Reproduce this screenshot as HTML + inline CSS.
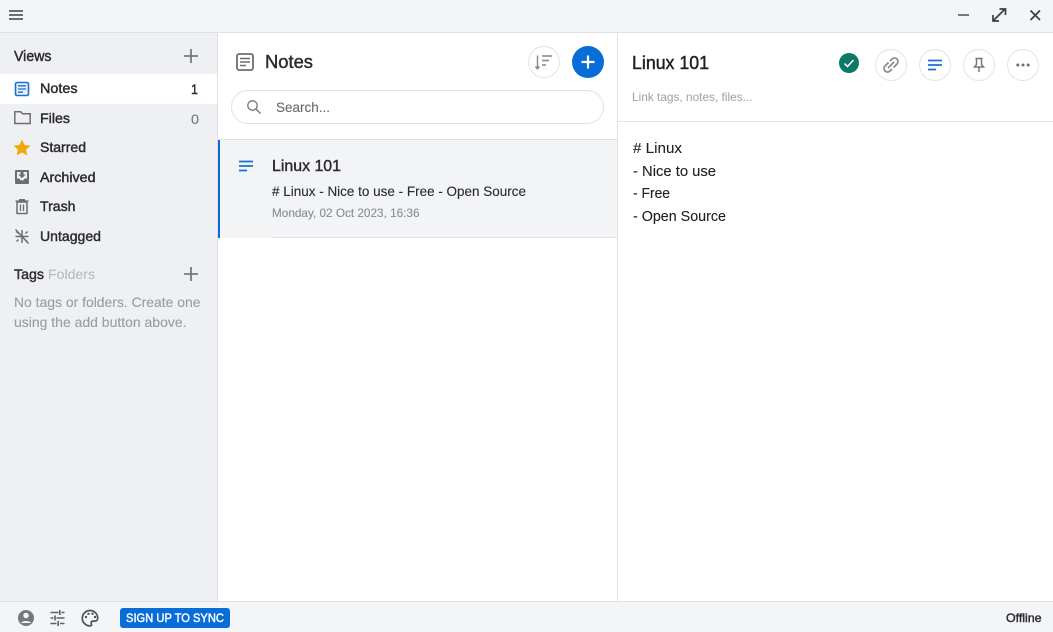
<!DOCTYPE html>
<html><head><meta charset="utf-8"><title>Notes</title>
<style>
html,body{margin:0;padding:0;background:#fff;width:1053px;height:632px;overflow:hidden}
svg{display:block}
text{font-family:"Liberation Sans",sans-serif;fill:currentColor;stroke:currentColor;stroke-width:.12;color:#2b2b2f}
.b{stroke-width:.42}
.ic{fill:none;stroke:#6d6e73;stroke-width:1.500}
.f{fill:#6d6e73;stroke:none}
.c{fill:#fff;stroke:#e2e4e7;stroke-width:1}
</style></head><body>
<svg width="1053" height="632" viewBox="0 0 1053 632" xmlns="http://www.w3.org/2000/svg">
<rect width="1053" height="632" fill="#fff"/>
<rect width="1053" height="32" fill="#f4f5f7"/>
<rect y="32" width="1053" height="1" fill="#dfe1e4"/>
<rect y="33" width="217" height="568" fill="#eef0f3"/>
<rect x="217" y="33" width="1" height="568" fill="#dfe1e4"/>
<rect x="617" y="33" width="1" height="568" fill="#dfe1e4"/>
<rect y="601" width="1053" height="31" fill="#f4f5f7"/>
<rect y="601" width="1053" height="1" fill="#dfe1e4"/>

<!-- titlebar -->
<rect x="9" y="10" width="14" height="2" fill="#6d6e73"/>
<rect x="9" y="14" width="14" height="2" fill="#6d6e73"/>
<rect x="9" y="18" width="14" height="2" fill="#6d6e73"/>
<rect x="958" y="14" width="11" height="2" fill="#77787d"/>
<path d="M993.500 20.500l11-11M999.500 9h6v6M993 15v6h6" stroke="#3c3d41" stroke-width="1.700" fill="none"/>
<path d="M1030.500 10.500l9.500 9.500M1040 10.500l-9.500 9.500" stroke="#3c3d41" stroke-width="1.700" fill="none"/>

<!-- sidebar -->
<text x="14" y="61" font-size="14.500" class="b" textLength="37.500" lengthAdjust="spacingAndGlyphs">Views</text>
<path d="M191 49v14M184 56h14" stroke="#77787d" stroke-width="1.800" fill="none"/>
<rect y="74" width="217" height="30" fill="#fff"/>
<rect x="15.500" y="82.500" width="13" height="13" rx="1.500" fill="#e6f0fb" stroke="#1a6fd0" stroke-width="1.600"/>
<path d="M18 85.800h8M18 89h8M18 92.200h5" stroke="#1a6fd0" stroke-width="1.300" fill="none"/>
<text x="40" y="93" font-size="14" class="b" textLength="37.500" lengthAdjust="spacingAndGlyphs">Notes</text>
<text x="191" y="94" font-size="14" class="b" textLength="7" lengthAdjust="spacingAndGlyphs">1</text>

<path d="M14.800 123.500v-11.700h6l1.700 2h7.700v9.700z" class="ic"/>
<text x="40" y="123" font-size="14" class="b" textLength="30" lengthAdjust="spacingAndGlyphs">Files</text>
<text x="191" y="124" font-size="14" style="color:#77787d" textLength="8" lengthAdjust="spacingAndGlyphs">0</text>

<path d="M22 139.500l2.500 5.500 6 .6-4.500 4 1.300 5.900-5.300-3.100-5.300 3.100 1.300-5.900-4.500-4 6-.6z" fill="#f0a80a"/>
<text x="40" y="152" font-size="14" class="b" textLength="46" lengthAdjust="spacingAndGlyphs">Starred</text>

<rect x="15" y="170" width="14" height="14" rx="1" class="f"/>
<path d="M17 172h10v6.500h-2.500l-1 1.800h-3l-1-1.800h-2.500z" fill="#eef0f3"/>
<path d="M20.500 171.500h3v3h2.200l-3.700 3.700-3.700-3.700h2.200z" class="f"/>
<text x="40" y="182" font-size="14" class="b" textLength="55.500" lengthAdjust="spacingAndGlyphs">Archived</text>

<path d="M17 202v11.500h10v-11.500z" class="ic"/>
<path d="M15.500 201h13M19 199.700h6M20.500 204.500v6.500M23.500 204.500v6.500" class="ic" style="stroke-width:1.300"/>
<text x="40" y="211" font-size="14" class="b" textLength="35.500" lengthAdjust="spacingAndGlyphs">Trash</text>

<path d="M15.500 229.500l13 14M22 230v13M15.500 236.500h13M16.500 231.500l2 2M27.500 231.500l-2 2M16.500 241.500l2-2M27 241.500l-2-2" stroke="#6d6e73" stroke-width="1.500" fill="none"/>
<text x="40" y="241" font-size="14" class="b" textLength="61" lengthAdjust="spacingAndGlyphs">Untagged</text>

<text x="14" y="279" font-size="14" class="b" textLength="30" lengthAdjust="spacingAndGlyphs">Tags</text>
<text x="48" y="279" font-size="14" style="color:#b9bbbf" textLength="47" lengthAdjust="spacingAndGlyphs">Folders</text>
<path d="M191 267v14M184 274h14" stroke="#77787d" stroke-width="1.800" fill="none"/>
<text x="14" y="307" font-size="14" style="color:#9a9ca1" textLength="186.500" lengthAdjust="spacingAndGlyphs">No tags or folders. Create one</text>
<text x="14" y="327" font-size="14" style="color:#9a9ca1" textLength="172.500" lengthAdjust="spacingAndGlyphs">using the add button above.</text>

<!-- notes column -->
<rect x="237" y="54" width="16" height="16" rx="2" class="ic" style="stroke-width:1.800"/>
<path d="M240 58.500h10M240 62h10M240 65.500h6" class="ic"/>
<text x="265" y="68" font-size="18" class="b" textLength="48" lengthAdjust="spacingAndGlyphs">Notes</text>
<circle cx="544" cy="62" r="15.500" class="c"/>
<path d="M537.500 55.500v13M535.500 66.500l2 2.300 2-2.300M542 56h10M542 60.500h7M542 65h4" stroke="#85868b" stroke-width="1.400" fill="none"/>
<circle cx="588" cy="62" r="16" fill="#086dd6"/>
<path d="M588 55.500v13M581.500 62h13" stroke="#fff" stroke-width="2.200" fill="none"/>

<rect x="231.500" y="90.500" width="372" height="33" rx="16.500" fill="#fff" stroke="#dfe1e4"/>
<circle cx="252.500" cy="105.500" r="4.700" class="ic" style="stroke:#77787d;stroke-width:1.300"/>
<path d="M256 109l4.500 4.500" class="ic" style="stroke:#77787d"/>
<text x="276" y="112" font-size="14" style="color:#66676c" textLength="54" lengthAdjust="spacingAndGlyphs">Search...</text>

<rect x="218" y="139" width="399" height="1" fill="#dfe1e4"/>
<rect x="218" y="140" width="399" height="98" fill="#f2f4f6"/>
<rect x="218" y="140" width="2" height="98" fill="#086dd6"/>
<rect x="272" y="237" width="345" height="1" fill="#dfe1e4"/>
<path d="M239 161.500h14M239 166h14M239 170.500h8" stroke="#1a6fd0" stroke-width="1.800" fill="none"/>
<text x="272" y="171" font-size="16" class="b" textLength="69" lengthAdjust="spacingAndGlyphs">Linux 101</text>
<text x="272" y="196" font-size="14" textLength="254" lengthAdjust="spacingAndGlyphs"># Linux - Nice to use - Free - Open Source</text>
<text x="272" y="217" font-size="12" style="color:#8b8d92" textLength="147.500" lengthAdjust="spacingAndGlyphs">Monday, 02 Oct 2023, 16:36</text>

<!-- editor -->
<text x="632" y="69" font-size="18" class="b" style="color:#1f1f22" textLength="77" lengthAdjust="spacingAndGlyphs">Linux 101</text>
<text x="632" y="101" font-size="12" style="color:#a6a8ac" textLength="120.500" lengthAdjust="spacingAndGlyphs">Link tags, notes, files...</text>
<circle cx="849" cy="63" r="10" fill="#0a7a66"/>
<path d="M844.500 63.500l3 3 6-6.500" stroke="#fff" stroke-width="1.500" fill="none"/>
<circle cx="891" cy="65" r="15.500" class="c"/>
<path d="M888.500 62.500l-3.500 3.500a3.500 3.500 0 0 0 5 5l2-2M893.500 67.500l3.500-3.500a3.500 3.500 0 0 0-5-5l-2 2M888 68l6-6" stroke="#85868b" stroke-width="1.600" fill="none"/>
<circle cx="935" cy="65" r="15.500" class="c"/>
<path d="M928 60.500h14M928 65h14M928 69.500h8" stroke="#1a6fd0" stroke-width="1.800" fill="none"/>
<circle cx="979" cy="65" r="15.500" class="c"/>
<path d="M975.500 58.500h7M976.500 58.500v6l-2 2.500h9l-2-2.500v-6M979 67v5" stroke="#77787d" stroke-width="1.500" fill="none"/>
<circle cx="1023" cy="65" r="15.500" class="c"/>
<circle cx="1017.800" cy="65" r="1.500" class="f"/><circle cx="1023" cy="65" r="1.500" class="f"/><circle cx="1028.200" cy="65" r="1.500" class="f"/>
<rect x="618" y="121" width="435" height="1" fill="#dfe1e4"/>

<text x="633" y="153" font-size="15" style="color:#1f1f22" textLength="49" lengthAdjust="spacingAndGlyphs"># Linux</text>
<text x="633" y="176" font-size="15" style="color:#1f1f22" textLength="83" lengthAdjust="spacingAndGlyphs">- Nice to use</text>
<text x="633" y="198" font-size="15" style="color:#1f1f22" textLength="37" lengthAdjust="spacingAndGlyphs">- Free</text>
<text x="633" y="221" font-size="15" style="color:#1f1f22" textLength="93" lengthAdjust="spacingAndGlyphs">- Open Source</text>

<!-- footer -->
<circle cx="26" cy="618" r="8" fill="#77787d"/>
<circle cx="26" cy="615.500" r="2.700" fill="#f4f5f7"/>
<path d="M20.800 623a6 4 0 0 1 10.400 0z" fill="#f4f5f7"/>
<path d="M50.500 612.500h8M61.500 612.500h3M50.500 618h3M56.500 618h8M50.500 623.500h6M60 623.500h4.500M59.800 610v5M55 615.500v5M58.200 621v5" stroke="#5f6065" stroke-width="1.600" fill="none"/>
<path d="M90 610.500a7.700 7.700 0 0 0 0 15.400c1.600 0 1.900-1.200 1.300-2.300-.7-1.300.2-2.500 1.600-2.500h2.200a2.700 2.700 0 0 0 2.600-3c0-4.300-3.500-7.600-7.700-7.600z" stroke="#4f5055" stroke-width="1.700" fill="none"/>
<circle cx="86" cy="617" r="1.200" fill="#4f5055"/><circle cx="88.500" cy="613.800" r="1.200" fill="#4f5055"/><circle cx="92.500" cy="613.800" r="1.200" fill="#4f5055"/><circle cx="95" cy="617" r="1.200" fill="#4f5055"/>
<rect x="120" y="608" width="110" height="20" rx="3" fill="#086dd6"/>
<text x="126" y="622" font-size="12" class="b" style="color:#fff" textLength="98" lengthAdjust="spacingAndGlyphs">SIGN UP TO SYNC</text>
<text x="1006" y="622" font-size="12" class="b" textLength="35.500" lengthAdjust="spacingAndGlyphs">Offline</text>
</svg>
</body></html>
